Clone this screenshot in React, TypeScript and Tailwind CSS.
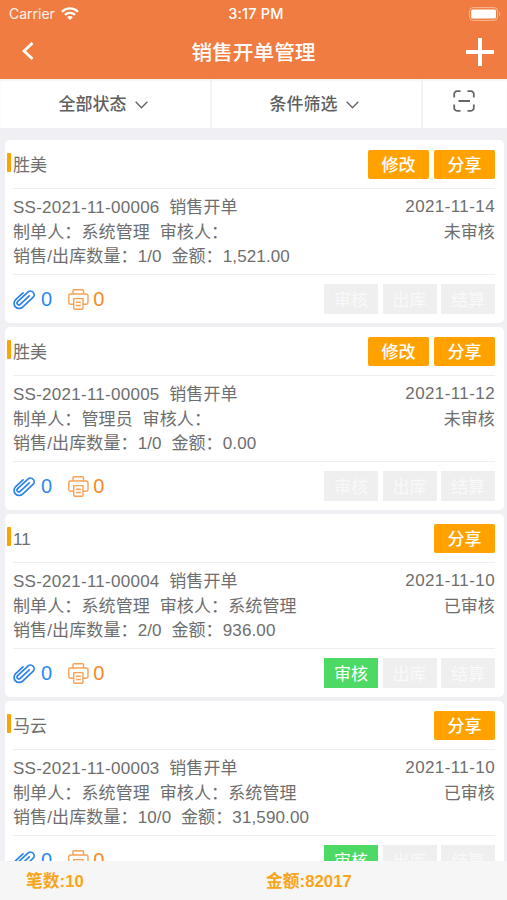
import type { ReactNode } from "react";

type Order = {
  customer: string;
  code: string;
  maker: string;
  auditor: string;
  quantity: string;
  amount: string;
  date: string;
  audited: boolean;
};

const orders: Order[] = [
  { customer: "胜美", code: "SS-2021-11-00006", maker: "系统管理", auditor: "", quantity: "1/0", amount: "1,521.00", date: "2021-11-14", audited: false },
  { customer: "胜美", code: "SS-2021-11-00005", maker: "管理员", auditor: "", quantity: "1/0", amount: "0.00", date: "2021-11-12", audited: false },
  { customer: "11", code: "SS-2021-11-00004", maker: "系统管理", auditor: "系统管理", quantity: "2/0", amount: "936.00", date: "2021-11-10", audited: true },
  { customer: "马云", code: "SS-2021-11-00003", maker: "系统管理", auditor: "系统管理", quantity: "10/0", amount: "31,590.00", date: "2021-11-10", audited: true },
];

function WifiIcon() {
  return (
    <svg className="ml-[6px] h-[13px] w-[18px]" viewBox="0 0 18 13" fill="none" stroke="#fff" strokeWidth="2.3">
      <path d="M1 4.700C5.500.2 12.500.2 17 4.700" />
      <path d="M3.900 7.900C6.800 5.200 11.200 5.200 14.100 7.900" />
      <path d="M6.200 10.200C7.900 8.600 10.100 8.600 11.800 10.200L9 12.900Z" fill="#fff" stroke="none" />
    </svg>
  );
}

function BatteryIcon() {
  return (
    <svg className="h-[14px] w-[32px]" viewBox="0 0 32 14">
      <rect x=".6" y=".6" width="28" height="12.800" rx="3.500" fill="none" stroke="#fff" strokeOpacity=".45" />
      <rect x="2.200" y="2.400" width="24.800" height="9.200" rx="1.500" fill="#fff" />
      <path d="M30 4.800c1.600.5 1.600 3.900 0 4.400z" fill="#fff" fillOpacity=".45" />
    </svg>
  );
}

function ChevronDown() {
  return (
    <svg className="ml-[8px] h-[8px] w-[13px]" viewBox="0 0 13 8" fill="none" stroke="#666" strokeWidth="1.4">
      <path d="M.7.8l5.800 6 5.800-6" />
    </svg>
  );
}

function ScanIcon() {
  return (
    <svg className="h-[22px] w-[22px]" viewBox="0 0 22 22" fill="none" stroke="#666" strokeWidth="1.8">
      <path d="M1.200 7.500V4a2.800 2.800 0 0 1 2.800-2.800h3.500M14.500 1.200H18A2.800 2.800 0 0 1 20.800 4v3.500M20.800 14.500V18a2.800 2.800 0 0 1-2.800 2.800h-3.500M7.500 20.800H4A2.800 2.800 0 0 1 1.200 18v-3.500M5.500 11h11.500" />
    </svg>
  );
}

function ClipIcon() {
  return (
    <svg className="h-[22px] w-[22px]" viewBox="-11 -11 22 22" fill="none" stroke="#2b83ea" strokeWidth="1.7" strokeLinecap="round">
      <path transform="rotate(-43)" d="M6 1.300H-6.500A1.850 1.850 0 0 1-6.500-2.400H7.600A3.700 3.700 0 0 1 7.600 5H-6.500A5.100 5.100 0 0 1-6.500-5.200H3.500" />
    </svg>
  );
}

function PrinterIcon() {
  return (
    <svg className="h-[21px] w-[21px]" viewBox="0 0 21 21" fill="none" stroke="#f7a154" strokeWidth="1.4" strokeLinejoin="round">
      <path d="M5 5V1.800Q5 .8 6 .8h8.500q1 0 1 1V5" />
      <path d="M5.700 15.200H2.500A1.700 1.700 0 0 1 .8 13.500V6.700A1.700 1.700 0 0 1 2.500 5h15.800A1.700 1.700 0 0 1 20 6.700v6.800a1.700 1.700 0 0 1-1.700 1.700H15" />
      <path d="M5.700 9.600H15v9.700q0 1-1 1H6.700q-1 0-1-1zM8 13.200h4.800M8 16.500h4.800" />
    </svg>
  );
}

function ShareButton({ children }: { children: ReactNode }) {
  return (
    <button className="h-[29px] w-[61px] rounded-[2px] bg-[#ffa200] pt-[3px] text-[17px] leading-[26px] font-medium text-white">
      {children}
    </button>
  );
}

function StepButton({ children, active = false }: { children: ReactNode; active?: boolean }) {
  return (
    <button
      className={`h-[30px] w-[54px] pt-[3px] text-[17px] leading-[27px] ${active ? "bg-[#4cd964] text-white" : "bg-[#efefef] text-[#f9f9f9]"}`}
    >
      {children}
    </button>
  );
}

function OrderCard({ order }: { order: Order }) {
  return (
    <article className="h-[183px] shrink-0 rounded-[5px] bg-white pr-[9px] pl-[2px]">
      <header className="flex h-12 items-center">
        <span className="mb-[3px] h-[19px] w-1 rounded-[1px] bg-[#ffa200]" />
        <h2 className="ml-[2px] flex-1 pt-[3px]">{order.customer}</h2>
        <div className="flex gap-[5px] pt-[1px]">
          {!order.audited && <ShareButton>修改</ShareButton>}
          <ShareButton>分享</ShareButton>
        </div>
      </header>
      <div className="ml-[6px] flex h-[87px] justify-between border-y border-[#eeeeee] pt-[7px] leading-[24.5px] tracking-[0.12px]">
        <div className="whitespace-pre">
          <p><span className="tracking-[0.26px]">{order.code}</span>{"  销售开单"}</p>
          <p>制单人：{order.maker}{"  "}审核人：{order.auditor}</p>
          <p>销售/出库数量：{order.quantity}{"  "}金额：{order.amount}</p>
        </div>
        <div className="text-right">
          <p className="-mt-px mb-px tracking-[0.4px]">{order.date}</p>
          <p>{order.audited ? "已审核" : "未审核"}</p>
        </div>
      </div>
      <footer className="ml-[6px] flex h-12 items-center">
        <ClipIcon />
        <span className="ml-[6px] text-[20px] text-[#2b8af0]">0</span>
        <span className="ml-[16px]"><PrinterIcon /></span>
        <span className="ml-[4px] text-[20px] text-[#f58a1f]">0</span>
        <div className="ml-auto flex gap-[4.500px]">
          <StepButton active={order.audited}>审核</StepButton>
          <StepButton>出库</StepButton>
          <StepButton>结算</StepButton>
        </div>
      </footer>
    </article>
  );
}

export default function App() {
  return (
    <div className="flex h-[900px] w-[507px] flex-col overflow-hidden bg-[#efeff4] font-['Liberation_Sans','Noto_Sans_CJK_SC',sans-serif] text-[17px] text-[#6e6e6e]">
      <div className="h-[79px] shrink-0 bg-[#f07c41] text-white">
        <div className="grid h-[27px] grid-cols-3 items-center pr-[6px] pl-[9px] text-[14px]">
          <div className="flex items-center font-['Inter','Liberation_Sans',sans-serif] text-white/90">
            Carrier
            <WifiIcon />
          </div>
          <span className="pl-[2px] text-center font-['Inter','Liberation_Sans',sans-serif] text-[14.500px] font-medium tracking-[0.2px]">3:17 PM</span>
          <div className="flex justify-end"><BatteryIcon /></div>
        </div>
        <div className="grid h-[52px] grid-cols-[80px_1fr_80px] items-center">
          <svg className="mb-[5px] ml-[22px] h-[18px] w-[12px]" viewBox="0 0 12 18" fill="none" stroke="#fff" strokeWidth="2.8">
            <path d="M10.500 1L2 9l8.500 8" />
          </svg>
          <h1 className="text-center text-[20.700px] font-medium">销售开单管理</h1>
          <svg className="mr-[13px] mb-[2px] ml-auto h-[28px] w-[28px]" viewBox="0 0 28 28" stroke="#fff" strokeWidth="4">
            <path d="M0 14h28M14 0v28" />
          </svg>
        </div>
      </div>

      <div className="grid h-[49px] shrink-0 grid-cols-[212px_211px_84px] bg-white text-[#5f5f5f] shadow-[inset_0_2px_2px_#f6f3f3]">
        <button className="flex items-center justify-center border-r-2 border-[#f3f3f6] pt-[2px] pr-[4px] font-medium">
          全部状态<ChevronDown />
        </button>
        <button className="flex items-center justify-center border-r-2 border-[#f3f3f6] pt-[2px] pr-[5px] font-medium">
          条件筛选<ChevronDown />
        </button>
        <button className="flex items-center justify-center pr-[2px] pb-[6px]"><ScanIcon /></button>
      </div>

      <main className="flex min-h-0 flex-1 flex-col gap-1 overflow-hidden px-[5px] pr-[3px] pt-3">
        {orders.map((order) => <OrderCard key={order.code} order={order} />)}
      </main>

      <footer className="grid h-[39px] shrink-0 grid-cols-[240px_1fr] items-center bg-[#f6f6f6] pt-[2px] pl-[26px] text-[16.800px] font-bold text-[#f9a51a]">
        <span>笔数:10</span>
        <span>金额:82017</span>
      </footer>
    </div>
  );
}
